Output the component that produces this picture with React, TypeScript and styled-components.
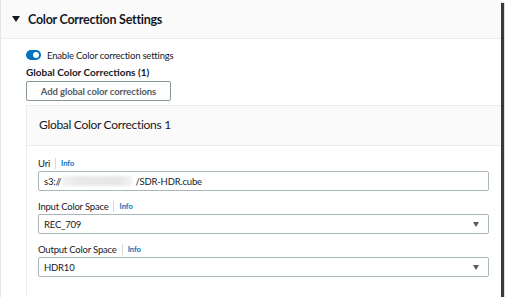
import styled, { createGlobalStyle } from "styled-components";

const GlobalStyle = createGlobalStyle`
  *, *::before, *::after {
    box-sizing: border-box;
  }
  html, body {
    margin: 0;
    padding: 0;
    background: #ffffff;
  }
  body {
    font-family: Lato, "Noto Sans", Arial, sans-serif;
    color: #16191f;
    letter-spacing: -0.2px;
  }
`;

const Frame = styled.div`
  width: 501px;
  height: 297px;
  border-left: 1px solid #e4e4e4;
  box-shadow: 3px 3px 1px #3a3a3a;
  overflow: hidden;
  display: flex;
  flex-direction: column;
  background: #ffffff;
`;

const SectionHeader = styled.div`
  height: 39px;
  flex: none;
  background: #fafafa;
  border-bottom: 1px solid #eaeded;
  display: flex;
  align-items: center;
  padding-left: 11px;
  gap: 8px;
`;

const Caret = styled.span`
  width: 0;
  height: 0;
  border-left: 4px solid transparent;
  border-right: 4px solid transparent;
  border-top: 6px solid #16191f;
`;

const Title = styled.h2`
  margin: 0;
  font-size: 12.5px;
  font-weight: 700;
  letter-spacing: -0.25px;
`;

const Body = styled.div`
  flex: 1;
  padding: 9px 0 0 25px;
  display: flex;
  flex-direction: column;
  min-height: 0;
`;

const ToggleRow = styled.label`
  display: flex;
  align-items: center;
  gap: 6px;
  font-size: 9.5px;
  height: 14px;
`;

const Toggle = styled.span`
  width: 15px;
  height: 10px;
  border-radius: 5px;
  background: #0073bb;
  position: relative;

  &::after {
    content: "";
    position: absolute;
    right: 2px;
    top: 2px;
    width: 6px;
    height: 6px;
    border-radius: 50%;
    background: #ffffff;
  }
`;

const SubHeading = styled.div`
  font-size: 10px;
  font-weight: 700;
  line-height: 12px;
  letter-spacing: 0;
  margin-top: 4px;
`;

const Button = styled.button`
  align-self: flex-start;
  margin-top: 3px;
  height: 20px;
  width: 145px;
  padding: 0;
  border: 1px solid #879596;
  border-radius: 2px;
  background: #ffffff;
  font-family: inherit;
  font-size: 9.5px;
  font-weight: 700;
  letter-spacing: -0.1px;
  color: #545b64;
  white-space: nowrap;
`;

const Card = styled.div`
  margin-top: 4px;
  flex: 1;
  border-left: 1px solid #eaeded;
  border-top: 1px solid #eaeded;
  display: flex;
  flex-direction: column;
`;

const CardHeader = styled.div`
  height: 40px;
  flex: none;
  background: #fafafa;
  border-bottom: 1px solid #eaeded;
  display: flex;
  align-items: center;
  padding: 0 0 2px 12px;
  font-size: 12px;
  letter-spacing: -0.3px;
`;

const CardBody = styled.div`
  padding: 10px 11px 0 11px;
  display: flex;
  flex-direction: column;
  gap: 8px;
  width: 473px;
`;

const Field = styled.div`
  display: flex;
  flex-direction: column;
`;

const LabelRow = styled.div`
  display: flex;
  align-items: center;
  height: 15px;
  font-size: 9.5px;
`;

const Info = styled.a`
  margin-left: 5px;
  padding-left: 5px;
  border-left: 1px solid #d5dbdb;
  font-size: 7.5px;
  font-weight: 700;
  color: #0073bb;
  line-height: 11px;
  letter-spacing: 0;
  text-decoration: none;
`;

const Box = styled.div`
  height: 20px;
  border: 1px solid #aab7b8;
  border-radius: 2px;
  display: flex;
  align-items: center;
  padding: 0 9px 0 5px;
  font-size: 9.5px;
  color: #16191f;
`;

const Blur = styled.span`
  display: inline-block;
  width: 70px;
  height: 10px;
  margin: 0 3px 0 1px;
  background: linear-gradient(90deg, #f3f3f3, #e9e9e9 20%, #e6e6e6 80%, #f3f3f3);
  filter: blur(1.5px);
`;

const SelectValue = styled.span`
  flex: 1;
`;

const SelectCaret = styled.span`
  width: 0;
  height: 0;
  border-left: 3.5px solid transparent;
  border-right: 3.5px solid transparent;
  border-top: 5px solid #545b64;
`;

function Select({ value }: { value: string }) {
  return (
    <Box>
      <SelectValue>{value}</SelectValue>
      <SelectCaret />
    </Box>
  );
}

export default function App() {
  return (
    <>
      <GlobalStyle />
      <Frame>
        <SectionHeader>
          <Caret />
          <Title>Color Correction Settings</Title>
        </SectionHeader>
        <Body>
          <ToggleRow>
            <Toggle />
            Enable Color correction settings
          </ToggleRow>
          <SubHeading>Global Color Corrections (1)</SubHeading>
          <Button>Add global color corrections</Button>
          <Card>
            <CardHeader>Global Color Corrections 1</CardHeader>
            <CardBody>
              <Field>
                <LabelRow>
                  Uri<Info href="#">Info</Info>
                </LabelRow>
                <Box>
                  s3://<Blur />/SDR-HDR.cube
                </Box>
              </Field>
              <Field>
                <LabelRow>
                  Input Color Space<Info href="#">Info</Info>
                </LabelRow>
                <Select value="REC_709" />
              </Field>
              <Field>
                <LabelRow>
                  Output Color Space<Info href="#">Info</Info>
                </LabelRow>
                <Select value="HDR10" />
              </Field>
            </CardBody>
          </Card>
        </Body>
      </Frame>
    </>
  );
}
